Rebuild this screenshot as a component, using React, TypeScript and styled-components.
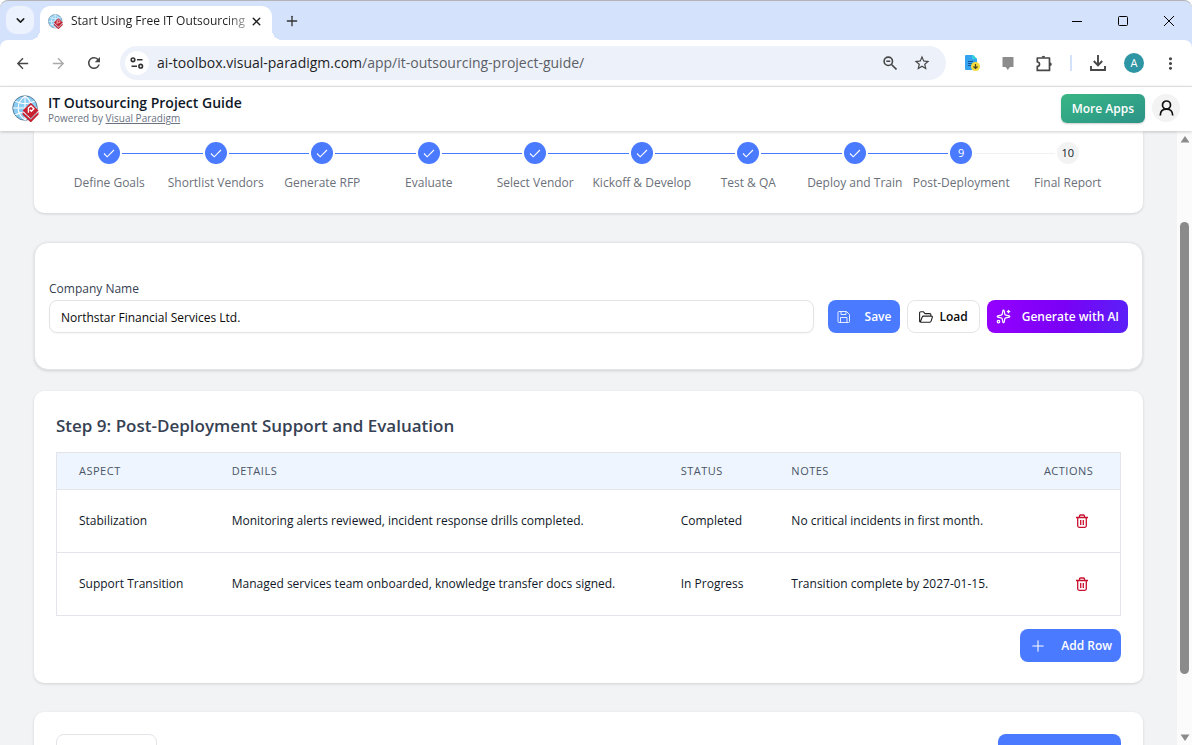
import React from 'react';
import styled, { createGlobalStyle, css } from 'styled-components';
import { ChevronDown, Sparkles, X, Plus } from 'lucide-react';
import { MdArrowBack, MdArrowForward, MdRefresh, MdStarBorder, MdMoreVert } from 'react-icons/md';

const Global = createGlobalStyle`
  *, *::before, *::after { box-sizing: border-box; }
  html, body { margin: 0; height: 100%; }
  body {
    overflow: hidden;
    background: #fff;
    color: #101828;
    font-family: "Segoe UI", "Open Sans", "Noto Sans", sans-serif;
    font-size: 12px;
    line-height: 16px;
  }
  button, input { font: inherit; color: inherit; margin: 0; }
  button { border: 0; background: none; padding: 0; cursor: pointer; }
  svg { display: block; flex: none; }
`;

const Window = styled.div`
  display: flex;
  flex-direction: column;
  height: 100vh;
  overflow: hidden;
  background: #d5e2fc;
  border-top: 1px solid #b4b4b8;
  border-radius: 8px 8px 0 0;
`;

const TabStrip = styled.div`
  display: flex;
  height: 39px;
  flex: none;
  padding: 5px 0 0 6px;
`;

const TabSearch = styled.button`
  display: grid;
  place-items: center;
  width: 28px;
  height: 28px;
  border-radius: 10px;
  background: #ecf2fe;
  color: #1f1f1f;
`;

const Tab = styled.div`
  position: relative;
  display: flex;
  align-items: center;
  width: 232px;
  margin-left: 6px;
  padding: 0 9px 4px 8px;
  border-radius: 10px 10px 0 0;
  background: #fff;
  color: #1f1f1f;
  &::after {
    content: '';
    position: absolute;
    left: 100%;
    bottom: 0;
    width: 10px;
    height: 10px;
    background: radial-gradient(circle at 100% 0, transparent 10px, #fff 10px);
  }
  &::before {
    content: '';
    position: absolute;
    right: 100%;
    bottom: 0;
    width: 10px;
    height: 10px;
    background: radial-gradient(circle at 0 0, transparent 10px, #fff 10px);
  }
`;

const TabTitle = styled.span`
  flex: 1;
  margin-left: 8px;
  white-space: nowrap;
  mask-image: linear-gradient(90deg, #000 86%, rgba(0, 0, 0, 0.3));
`;

const NewTab = styled.button`
  display: grid;
  place-items: center;
  width: 40px;
  height: 30px;
  color: #333;
`;

const WindowControls = styled.div`
  display: flex;
  margin-left: auto;
`;

const WindowButton = styled.button`
  display: grid;
  place-items: center;
  width: 46px;
  height: 30px;
`;

const Toolbar = styled.div`
  display: flex;
  align-items: center;
  flex: none;
  height: 46px;
  padding: 0 4px;
  background: #fff;
  border-radius: 8px 8px 0 0;
`;

const ToolButton = styled.button<{ $w?: number; $color?: string }>`
  display: grid;
  place-items: center;
  width: ${p => p.$w ?? 36}px;
  height: 30px;
  flex: none;
  color: ${p => p.$color ?? '#474747'};
`;

const NavGroup = styled.div`
  display: flex;
  padding-right: 8px;
`;

const AddressBar = styled.div`
  display: flex;
  align-items: center;
  flex: 1;
  min-width: 0;
  height: 34px;
  padding: 0 8px 0 5px;
  border-radius: 17px;
  background: #edf1fa;
`;

const SiteInfo = styled.button`
  display: grid;
  place-items: center;
  width: 24px;
  height: 24px;
  border-radius: 50%;
  background: #fff;
`;

const UrlText = styled.div`
  flex: 1;
  margin-left: 8px;
  font-size: 14px;
  line-height: 20px;
  white-space: nowrap;
  color: #5c5f66;
  b { font-weight: 400; color: #1f1f1f; }
`;

const Extensions = styled.div`
  display: flex;
  align-items: center;
  padding-left: 8px;
`;

const ToolDivider = styled.span`
  width: 2px;
  height: 16px;
  margin: 0 8px;
  background: #d3e1fb;
`;

const Avatar = styled.button`
  width: 20px;
  height: 20px;
  margin: 0 8px;
  border-radius: 50%;
  background: #2e95a5;
  color: #fff;
  font-size: 11px;
  line-height: 20px;
`;

const AppHeader = styled.header`
  position: relative;
  z-index: 1;
  display: flex;
  align-items: center;
  flex: none;
  height: 45px;
  padding: 0 12px 2px;
  background: #fff;
  border-top: 1px solid #dcdde0;
  box-shadow: 0 1px 3px rgba(0, 0, 0, 0.2);
`;

const Brand = styled.div`
  margin-left: 9px;
  padding-top: 4px;
`;

const BrandTitle = styled.h1`
  margin: 0;
  font-size: 14px;
  line-height: 16px;
  font-weight: 600;
`;

const Powered = styled.p`
  margin: 0;
  font-size: 10px;
  line-height: 14px;
  color: #6a7282;
  a { color: inherit; }
`;

const MoreApps = styled.button`
  height: 29px;
  margin-left: auto;
  padding: 1px 11px 0;
  border-radius: 6px;
  background: linear-gradient(160deg, #38b684, #2c9388);
  box-shadow: 0 1px 2px rgba(0, 0, 0, 0.2);
  color: #fff;
  font-weight: 600;
`;

const Account = styled.button`
  display: grid;
  place-items: center;
  width: 28px;
  height: 28px;
  margin-left: 7px;
  border-radius: 50%;
  background: #f3f3f4;
`;

const Viewport = styled.div`
  display: flex;
  flex: 1;
  min-height: 0;
  background: #f2f3f5;
`;

const Main = styled.main`
  flex: 1;
  min-width: 0;
  padding: 0 34px;
  overflow: hidden;
`;

const ScrollTrack = styled.div`
  display: flex;
  flex-direction: column;
  align-items: center;
  width: 15px;
  padding: 5px 0 4px;
  background: #fbfbfb;
`;

const ScrollThumb = styled.div`
  width: 9px;
  flex: 452;
  border-radius: 5px;
  background: #8b8b8b;
`;

const ScrollGap = styled.div<{ $grow: number }>`
  flex: ${p => p.$grow};
`;

const card = css`
  background: #fff;
  border-radius: 10px;
  box-shadow: 0 1px 3px rgba(0, 0, 0, 0.14);
`;

const StepsCard = styled.ol`
  ${card}
  display: grid;
  grid-template-columns: repeat(10, 1fr);
  margin: 0 0 29px;
  padding: 11px 22px 21px;
  border-radius: 0 0 10px 10px;
  list-style: none;
`;

const Step = styled.li`
  display: flex;
  flex-direction: column;
  gap: 10px;
  text-align: center;
  white-space: nowrap;
  color: #6b7079;
`;

const StepTrack = styled.div`
  display: flex;
  align-items: center;
  gap: 2px;
`;

const StepLine = styled.span<{ $tone: 'done' | 'todo' | 'none' }>`
  flex: 1;
  height: 1px;
  background: ${p => ({ done: '#4a7aff', todo: '#f1f1f2', none: 'transparent' })[p.$tone]};
`;

const StepDot = styled.span<{ $active: boolean }>`
  display: grid;
  place-items: center;
  width: 22px;
  height: 22px;
  border-radius: 50%;
  font-size: 11px;
  background: ${p => (p.$active ? '#4a7aff' : '#f3f3f3')};
  color: ${p => (p.$active ? '#fff' : '#101828')};
`;

const StepLabel = styled.span`
  display: flex;
  justify-content: center;
  line-height: 18px;
`;

const FormCard = styled.form`
  ${card}
  display: flex;
  align-items: flex-end;
  gap: 7px;
  margin-bottom: 21px;
  padding: 37px 14px 36px;
  border: 1px solid #e2e4e8;
  border-radius: 14px;
`;

const Field = styled.div`
  display: flex;
  flex-direction: column;
  flex: 1;
  margin-right: 7px;
  label {
    margin-bottom: 2px;
    line-height: 18px;
    font-weight: 500;
    color: #364153;
  }
  input {
    height: 33px;
    padding: 1px 11px 0;
    border: 1px solid #e2e4e8;
    border-radius: 8px;
    background: #fff;
    outline: 0;
    box-shadow: 0 1px 2px rgba(0, 0, 0, 0.04);
    color: #0a0a0a;
  }
`;

const Button = styled.button<{ $kind: 'primary' | 'outline' | 'ai' }>`
  display: flex;
  align-items: center;
  justify-content: space-between;
  height: 33px;
  padding: 0 9px;
  border-radius: 8px;
  font-weight: 600;
  white-space: nowrap;
  color: #fff;
  ${p => p.$kind === 'primary' && css`gap: 14px; background: #4a7aff;`}
  ${p => p.$kind === 'ai' && css`gap: 11px; background: linear-gradient(90deg, #9400ff, #7a00f5 55%, #5b20f8);`}
  ${p => p.$kind === 'outline' && css`
    gap: 6px;
    padding: 0 11px;
    border: 1px solid #e2e4e8;
    background: #fff;
    color: #0a0a0a;
  `}
`;

const StepSection = styled.section`
  ${card}
  margin-bottom: 29px;
  padding: 22px 22px 21px;
`;

const SectionTitle = styled.h2`
  margin: 0 0 13px;
  font-size: 17px;
  line-height: 26px;
  font-weight: 600;
  color: #364153;
`;

const Table = styled.table`
  width: 100%;
  table-layout: fixed;
  border-collapse: collapse;
  border: 1px solid #e3e5ea;
  text-align: left;
  th {
    height: 37px;
    padding: 0 22px;
    background: #eef5ff;
    font-size: 11px;
    font-weight: 500;
    letter-spacing: 0.5px;
    text-transform: uppercase;
    color: #4a5565;
  }
  td {
    height: 63px;
    padding: 0 22px;
    border-top: 1px solid #e3e5ea;
    white-space: nowrap;
  }
  th:last-child, td:last-child { padding: 0; }
`;

const Col = styled.col<{ $w: number }>`
  width: ${p => p.$w}%;
`;

const DeleteButton = styled.button`
  display: block;
  margin-left: 32px;
  color: #c8102e;
`;

const Actions = styled.div`
  display: flex;
  justify-content: flex-end;
  margin-top: 13px;
`;

const FooterCard = styled.nav`
  ${card}
  display: flex;
  justify-content: space-between;
  padding: 22px;
`;

const FooterButton = styled(Button)<{ $min: number }>`
  min-width: ${p => p.$min}px;
`;

const Logo = ({ size }: { size: number }) => (
  <svg width={size} height={size} viewBox="0 0 28 28" fill="none" aria-hidden="true">
    <circle cx="13.5" cy="13.5" r="12.7" fill="#8accf2" stroke="#54788f" strokeWidth="1" />
    <path d="M13.5 1v25M1 13.5h25M3.500 6.500q10 5 20 0M3.500 20.500q10-5 20 0M13.500 1C4 8 4 19 13.500 26M13.500 1c9.500 7 9.500 18 0 25" stroke="#fff" strokeWidth="1.100" />
    <path d="m19.500 8 8 8-8 8-8.500-8z" fill="#c8202f" />
    <path d="m11 17.500 8.500 8 8-8v2.800L19.500 28.500 11 20.500z" fill="#c8202f" />
    <path d="m11.300 17 8.200 7.900 7.700-7.900" stroke="#f3c9cc" strokeWidth=".6" />
    <path d="m17 18.500v-5l2.700-2.300 3 3-2.600 2.600-1.700-1.600" stroke="#fff" strokeWidth="1.400" />
  </svg>
);

const Check = () => (
  <svg width="12" height="9" viewBox="0 0 12 9" fill="none" stroke="#fff" strokeWidth="1.100" aria-hidden="true">
    <path d="m1 4.500 3.200 3.300L11 1" />
  </svg>
);

const Disk = () => (
  <svg width="14" height="14" viewBox="0 0 14 14" fill="none" stroke="#fff" strokeOpacity="0.850" aria-hidden="true">
    <path d="M2 1.500h7.500l3 3v7q0 1-1 1H2q-1 0-1-1v-9q0-1 1-1zM4 1.500v3h5v-3M3.500 12.500v-5H10v5" />
  </svg>
);

const Folder = () => (
  <svg width="14" height="14" viewBox="0 0 14 14" fill="none" stroke="#222" strokeWidth="1.100" strokeLinejoin="round" aria-hidden="true">
    <path d="M1.800 12.200q-1.200 0-1.200-1.200V3q0-1.200 1.200-1.200h2.700L6 3.600h4.700q1.200 0 1.200 1.200v1.300M1.300 12l1.900-5q.3-.9 1.300-.9h7.900q1.200 0 .9 1.200l-1.200 3.900q-.3 1-1.300 1h-9z" />
  </svg>
);

const Trash = () => (
  <svg width="12" height="14" viewBox="0 0 12 14" fill="none" stroke="currentColor" strokeWidth="1.300" aria-hidden="true">
    <path d="M0 3.500h12M3.500 3.300V2q0-1 1-1h3q1 0 1 1v1.300M1.700 3.500v8.300q0 1.500 1.500 1.500h5.600q1.500 0 1.500-1.500V3.500M4.700 6v5M7.300 6v5" />
  </svg>
);

const steps = [
  'Define Goals', 'Shortlist Vendors', 'Generate RFP', 'Evaluate', 'Select Vendor',
  'Kickoff & Develop', 'Test & QA', 'Deploy and Train', 'Post-Deployment', 'Final Report',
];
const current = 8;

const rows = [
  ['Stabilization', 'Monitoring alerts reviewed, incident response drills completed.', 'Completed', 'No critical incidents in first month.'],
  ['Support Transition', 'Managed services team onboarded, knowledge transfer docs signed.', 'In Progress', 'Transition complete by 2027-01-15.'],
];

const lineTone = (i: number) => (i < 0 || i >= steps.length - 1 ? 'none' : i < current ? 'done' : 'todo');

export default function App() {
  return (
    <Window>
      <Global />
      <TabStrip>
        <TabSearch aria-label="Search tabs"><ChevronDown size={13} strokeWidth={2.8} /></TabSearch>
        <Tab>
          <Logo size={15} />
          <TabTitle>Start Using Free IT Outsourcing</TabTitle>
          <button aria-label="Close tab"><X size={13} strokeWidth={2.6} /></button>
        </Tab>
        <NewTab aria-label="New tab"><Plus size={16} strokeWidth={2} /></NewTab>
        <WindowControls>
          <WindowButton aria-label="Minimize">
            <svg width="10" height="10" stroke="#000"><path d="M0 5.500h10" /></svg>
          </WindowButton>
          <WindowButton aria-label="Maximize">
            <svg width="10" height="10" fill="none" stroke="#000"><rect x=".5" y=".5" width="9" height="9" rx="1" /></svg>
          </WindowButton>
          <WindowButton aria-label="Close">
            <svg width="10" height="10" stroke="#000"><path d="m0 0 10 10M10 0 0 10" /></svg>
          </WindowButton>
        </WindowControls>
      </TabStrip>

      <Toolbar>
        <NavGroup>
          <ToolButton aria-label="Back"><MdArrowBack size={17} /></ToolButton>
          <ToolButton aria-label="Forward" $color="#a9a9ab"><MdArrowForward size={17} /></ToolButton>
          <ToolButton aria-label="Reload"><MdRefresh size={18} /></ToolButton>
        </NavGroup>
        <AddressBar>
          <SiteInfo aria-label="Site information">
            <svg width="14" height="12" viewBox="0 0 14 12" fill="none" stroke="#333" strokeWidth="1.600">
              <circle cx="3" cy="2.800" r="1.800" /><path d="M7 2.800h5.500M1.500 9.200H7" /><circle cx="10.700" cy="9.200" r="1.800" />
            </svg>
          </SiteInfo>
          <UrlText><b>ai-toolbox.visual-paradigm.com</b>/app/it-outsourcing-project-guide/</UrlText>
          <ToolButton $w={32} aria-label="Zoom">
            <svg width="14" height="14" fill="none" stroke="#474747" strokeWidth="1.600">
              <circle cx="5.300" cy="5.300" r="4.200" /><path d="m8.500 8.500 5 5M3.300 5.300h4" />
            </svg>
          </ToolButton>
          <ToolButton $w={32} aria-label="Bookmark"><MdStarBorder size={18} /></ToolButton>
        </AddressBar>
        <Extensions>
          <ToolButton aria-label="Page saver">
            <svg width="15" height="16">
              <path d="M1 0h7l4 4v11H1q-1 0-1-1V1q0-1 1-1z" fill="#36a3ee" />
              <path d="M7 0h1l4 4H7z" fill="#31d3d8" />
              <path d="M3 6.500h5M3 8.500h4M3 10.500h3" stroke="#14559a" />
              <circle cx="10.500" cy="11.500" r="4.500" fill="#f6dc3a" />
              <path d="M10.500 9v4.500m-2-2 2 2 2-2" fill="none" stroke="#4a4520" strokeWidth="1.200" />
            </svg>
          </ToolButton>
          <ToolButton aria-label="Comments">
            <svg width="12" height="13"><path d="M1 0h10q.5 0 .5.500v9q0 .5-.5.500H8l-2.200 3L3.600 10H1q-.5 0-.5-.5v-9Q.5 0 1 0z" fill="#8c8c8c" /></svg>
          </ToolButton>
          <ToolButton aria-label="Extensions">
            <svg width="17" height="17" fill="none" stroke="#474747" strokeWidth="1.700" strokeLinejoin="round">
              <path d="M1.300 3h12.200v12.400H1.300v-4q2.200-.1 2.200-2.200T1.300 7z" /><path d="M5.600 2.600a1.800 1.800 0 0 1 3.600 0zM14 7.400a1.800 1.800 0 0 1 0 3.600z" fill="#474747" stroke="none" />
            </svg>
          </ToolButton>
          <ToolDivider />
          <ToolButton aria-label="Downloads">
            <svg width="16" height="16" fill="none" stroke="#474747" strokeWidth="1.900">
              <path d="M8 0v10M3.800 6 8 10.300 12.200 6M1 11v4h14v-4" />
            </svg>
          </ToolButton>
          <Avatar aria-label="Profile">A</Avatar>
          <ToolButton aria-label="Menu"><MdMoreVert size={19} /></ToolButton>
        </Extensions>
      </Toolbar>

      <AppHeader>
        <Logo size={27} />
        <Brand>
          <BrandTitle>IT Outsourcing Project Guide</BrandTitle>
          <Powered>Powered by <a href="#visual-paradigm">Visual Paradigm</a></Powered>
        </Brand>
        <MoreApps>More Apps</MoreApps>
        <Account aria-label="Account">
          <svg width="15" height="16" fill="none" stroke="#111" strokeWidth="1.700">
            <circle cx="7.500" cy="5" r="4" /><path d="M1.300 15.500q0-6.300 6.200-6.300t6.200 6.300" />
          </svg>
        </Account>
      </AppHeader>

      <Viewport>
        <Main>
          <StepsCard>
            {steps.map((label, i) => (
              <Step key={label}>
                <StepTrack>
                  <StepLine $tone={lineTone(i - 1)} />
                  <StepDot $active={i <= current}>{i < current ? <Check /> : i + 1}</StepDot>
                  <StepLine $tone={lineTone(i)} />
                </StepTrack>
                <StepLabel>{label}</StepLabel>
              </Step>
            ))}
          </StepsCard>

          <FormCard onSubmit={e => e.preventDefault()}>
            <Field>
              <label htmlFor="company">Company Name</label>
              <input id="company" defaultValue="Northstar Financial Services Ltd." />
            </Field>
            <Button type="button" $kind="primary"><Disk />Save</Button>
            <Button type="button" $kind="outline"><Folder />Load</Button>
            <Button type="button" $kind="ai"><Sparkles size={15} strokeWidth={2} />Generate with AI</Button>
          </FormCard>

          <StepSection>
            <SectionTitle>Step 9: Post-Deployment Support and Evaluation</SectionTitle>
            <Table>
              <colgroup>
                <Col $w={14.4} /><Col $w={42.2} /><Col $w={10.4} /><Col $w={25.8} /><Col $w={7.2} />
              </colgroup>
              <thead>
                <tr><th>Aspect</th><th>Details</th><th>Status</th><th>Notes</th><th>Actions</th></tr>
              </thead>
              <tbody>
                {rows.map(row => (
                  <tr key={row[0]}>
                    {row.map(cell => <td key={cell}>{cell}</td>)}
                    <td><DeleteButton aria-label={`Delete ${row[0]}`}><Trash /></DeleteButton></td>
                  </tr>
                ))}
              </tbody>
            </Table>
            <Actions>
              <Button type="button" $kind="primary"><Plus size={18} strokeWidth={1.4} />Add Row</Button>
            </Actions>
          </StepSection>

          <FooterCard>
            <FooterButton $kind="outline" $min={101} aria-label="Previous step" />
            <FooterButton $kind="primary" $min={123} aria-label="Next step" />
          </FooterCard>
        </Main>
        <ScrollTrack aria-hidden="true">
          <svg width="10" height="7"><path d="M5 0 9.500 6.500H.5z" fill="#8b8b8b" /></svg>
          <ScrollGap $grow={79} />
          <ScrollThumb />
          <ScrollGap $grow={60} />
          <svg width="10" height="7"><path d="M5 7 .5.500h9z" fill="#8b8b8b" /></svg>
        </ScrollTrack>
      </Viewport>
    </Window>
  );
}
